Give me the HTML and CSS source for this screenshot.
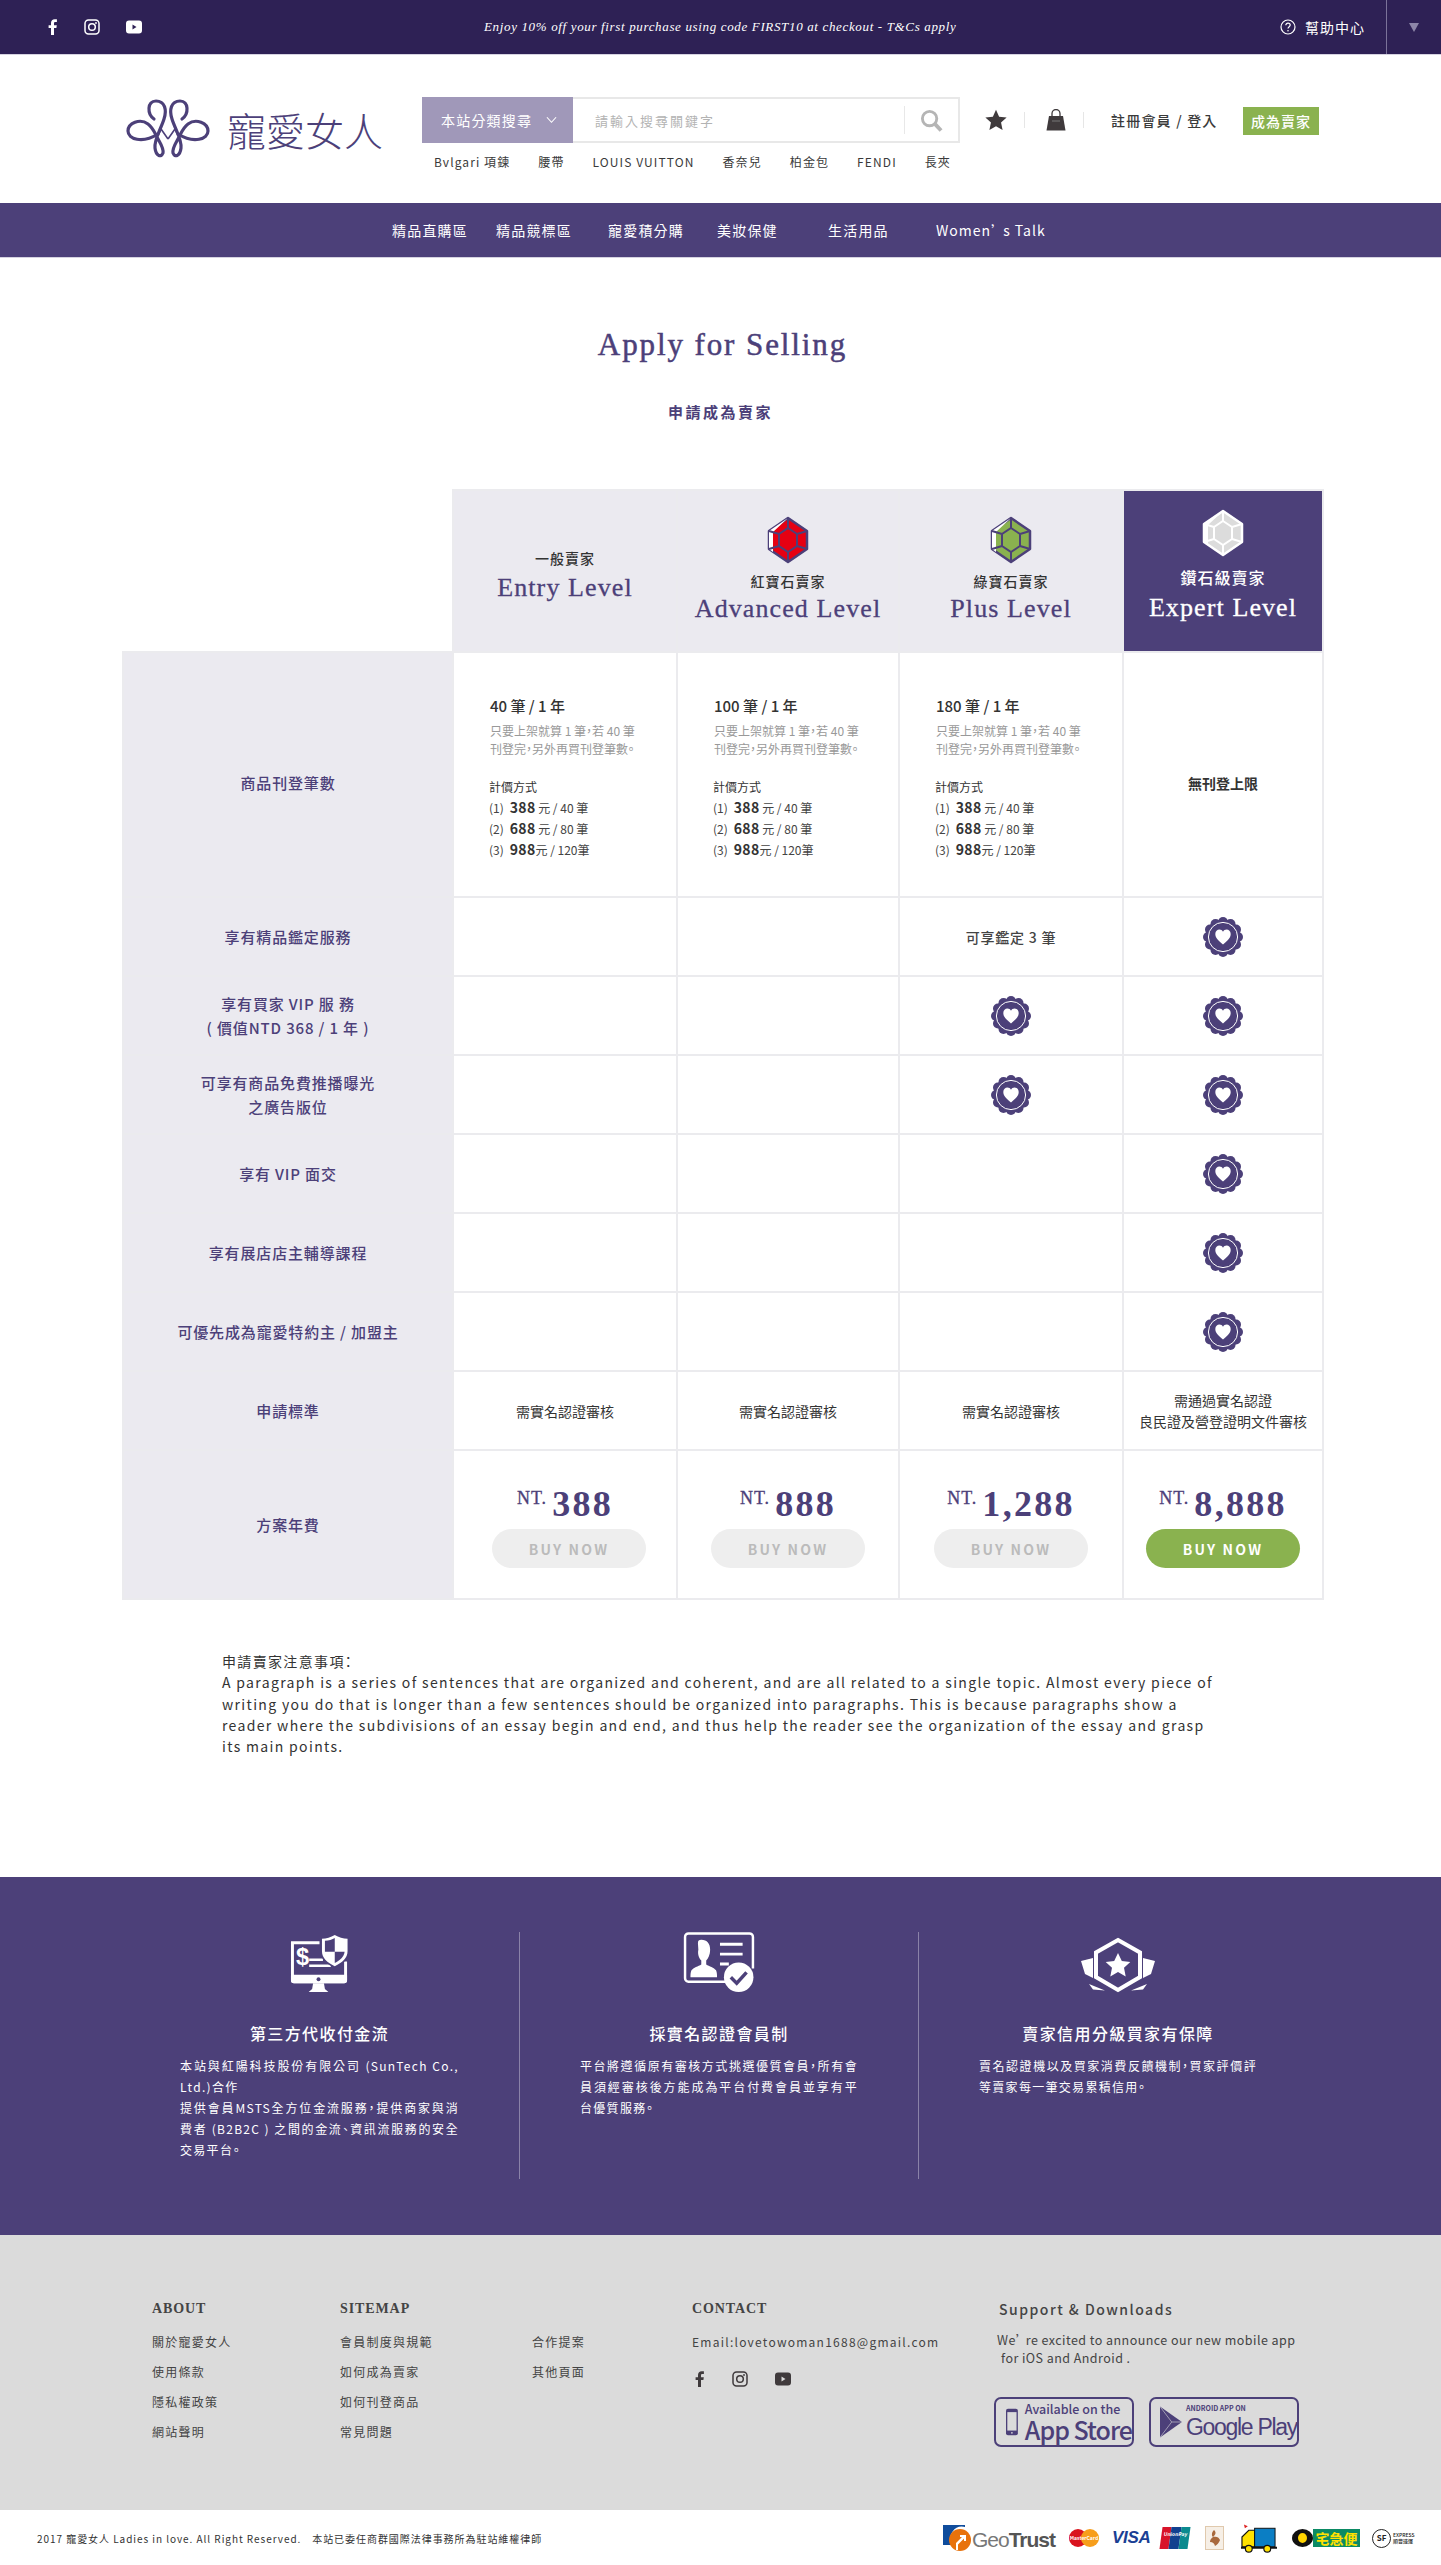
FILE: index.html
```html
<!DOCTYPE html>
<html lang="zh-Hant">
<head>
<meta charset="utf-8">
<title>寵愛女人 Apply for Selling</title>
<link rel="stylesheet" href="styles.css">
</head>
<body>
<svg class="defs" width="0" height="0" aria-hidden="true">
  <defs>
    <symbol id="badge" viewBox="0 0 40 40">
      <g fill="#4c4079">
        <circle cx="20" cy="20" r="17.6"/>
        <circle cx="20" cy="5" r="5"/><circle cx="27.5" cy="7" r="5"/><circle cx="33" cy="12.5" r="5"/><circle cx="35" cy="20" r="5"/><circle cx="33" cy="27.5" r="5"/><circle cx="27.5" cy="33" r="5"/><circle cx="20" cy="35" r="5"/><circle cx="12.5" cy="33" r="5"/><circle cx="7" cy="27.5" r="5"/><circle cx="5" cy="20" r="5"/><circle cx="7" cy="12.5" r="5"/><circle cx="12.5" cy="7" r="5"/>
      </g>
      <circle cx="20" cy="20" r="14.6" fill="none" stroke="#fff" stroke-width="1"/>
      <path d="M20 27.5 C16 24 12.3 21.2 12.3 17 C12.3 14.300 14.300 12.600 16.400 12.600 C18 12.600 19.300 13.500 20 14.800 C20.700 13.500 22 12.600 23.600 12.600 C25.700 12.600 27.700 14.300 27.700 17 C27.700 21.200 24 24 20 27.500Z" fill="#fff"/>
    </symbol>
    <symbol id="fb" viewBox="0 0 10 16"><path d="M3 16V9H.6V6.200H3V4.100C3 1.500 4.500.2 6.700.2c1 0 1.900.1 2.200.1v2.600H7.400c-1.200 0-1.400.6-1.400 1.400v2h2.800L8.400 9H6v7z" fill="currentColor"/></symbol>
    <symbol id="ig" viewBox="0 0 16 16"><rect x="1" y="1" width="14" height="14" rx="3.500" fill="none" stroke="currentColor" stroke-width="1.500"/><circle cx="8" cy="8" r="3.300" fill="none" stroke="currentColor" stroke-width="1.500"/><circle cx="12" cy="4" r=".9" fill="currentColor"/></symbol>
    <symbol id="yt" viewBox="0 0 16 16"><path fill-rule="evenodd" d="M3 1.500h10a3 3 0 0 1 3 3v7a3 3 0 0 1-3 3H3a3 3 0 0 1-3-3v-7a3 3 0 0 1 3-3zM6.500 5.500v5l4-2.500z" fill="currentColor"/></symbol>
    <symbol id="gem" viewBox="0 0 42 48">
      <path d="M21 2 40 15V33L21 46 2 33V15Z" fill="var(--gem)" stroke="var(--line)" stroke-width="2.500" stroke-linejoin="round"/>
      <path d="M21 2 2 15V33L6 36V16Z" fill="#fff"/>
      <path d="M21 12 30 18V30L21 36 12 30V18ZM21 2V12M40 15 30 18M40 33 30 30M21 46V36M2 33 12 30M2 15 12 18" fill="none" stroke="var(--line)" stroke-width="2"/>
    </symbol>
    <symbol id="wing" viewBox="6 6 84 62">
      <path d="M34 27C27 22 27 9 36 9 45 9 47 18 44 27 41 37 34 47 35 56 36 64 41 66 43 61 44 55 39 50 36 43 34 39 32 35 28 32 20 26 8 31 8 39 8 47 22 52 38 42" fill="none" stroke="#4c4079" stroke-width="3.200" stroke-linecap="round"/>
      <path d="M38 44 41 37 48 47" fill="none" stroke="#4c4079" stroke-width="1.600"/>
    </symbol>
  </defs>
</svg>

<div class="topbar">
  <div class="top-social">
    <svg class="ic-f"><use href="#fb"/></svg>
    <svg class="ic-s"><use href="#ig"/></svg>
    <svg class="ic-s"><use href="#yt"/></svg>
  </div>
  <p class="promo">Enjoy 10% off your first purchase using code FIRST10 at checkout - T&amp;Cs apply</p>
  <div class="help">
    <svg class="help-ic" viewBox="0 0 16 16"><circle cx="8" cy="8" r="7" fill="none" stroke="#fff" stroke-width="1.200"/><path d="M5.800 6.200C5.800 4.900 6.800 4.100 8 4.100c1.300 0 2.200.8 2.200 1.900 0 1.700-2.200 1.700-2.200 3.600" fill="none" stroke="#fff" stroke-width="1.200"/><circle cx="8" cy="11.700" r=".8" fill="#fff"/></svg>
    <span>幫助中心</span>
  </div>
  <div class="lang"><span class="tri"></span></div>
</div>

<header class="masthead">
  <a class="logo">
    <svg class="logo-mark" viewBox="6 6 84 62">
      <use href="#wing" x="6" y="6" width="84" height="62"/>
      <g transform="translate(96 0) scale(-1 1)"><use href="#wing" x="6" y="6" width="84" height="62"/></g>
    </svg>
    <span class="logo-text">寵愛女人</span>
  </a>
  <div class="search-col">
    <div class="search">
      <div class="search-cat"><span>本站分類搜尋</span>
        <svg class="chev" viewBox="0 0 12 8"><path d="M1 1l5 5.500L11 1" fill="none" stroke="#fff" stroke-width="1.200"/></svg>
      </div>
      <div class="search-input">請輸入搜尋關鍵字</div>
      <div class="search-btn">
        <svg viewBox="0 0 24 24" class="mag"><circle cx="10" cy="10" r="7.500" fill="none" stroke="#b5b5b5" stroke-width="3"/><path d="M15.500 15.500 22 22.500" stroke="#b5b5b5" stroke-width="4"/></svg>
      </div>
    </div>
    <ul class="tags">
      <li>Bvlgari 項鍊</li><li>腰帶</li><li>LOUIS VUITTON</li><li>香奈兒</li><li>柏金包</li><li>FENDI</li><li>長夾</li>
    </ul>
  </div>
  <div class="actions">
    <svg class="star" viewBox="0 0 24 24"><path d="M12 .8l3.400 7.600 8.200.9-6.100 5.500 1.700 8.100L12 18.800l-7.200 4.100 1.700-8.100L.4 9.300l8.200-.9z" fill="#3f3a3c"/></svg>
    <span class="sep"></span>
    <svg class="bag" viewBox="0 0 20 22"><path d="M6 7V4.500a4 4 0 0 1 8 0V7" fill="none" stroke="#3f3a3c" stroke-width="1.300"/><path d="M3 7h14l2.500 14.500H.5z" fill="#3f3a3c"/><path d="M6 12h8" stroke="#777" stroke-width="1"/></svg>
    <span class="sep"></span>
    <a class="login">註冊會員 / 登入</a>
    <a class="become">成為賣家</a>
  </div>
</header>

<nav class="mainnav">
  <a class="n1">精品直購區</a><a class="n2">精品競標區</a><a class="n3">寵愛積分購</a><a class="n4">美妝保健</a><a class="n5">生活用品</a><a class="n6">Women’ s Talk</a>
</nav>

<main>
  <h1 class="title">Apply for Selling</h1>
  <p class="subtitle">申請成為賣家</p>

  <table class="plans">
    <colgroup><col class="c0"><col class="c1"><col class="c2"><col class="c3"><col class="c4"></colgroup>
    <thead>
      <tr class="r-head">
        <th class="blank"></th>
        <th class="plan entry"><span class="pname">一般賣家</span><span class="plevel">Entry Level</span></th>
        <th class="plan">
          <svg class="gem gem-red"><use href="#gem"/></svg>
          <span class="pname">紅寶石賣家</span><span class="plevel">Advanced Level</span></th>
        <th class="plan">
          <svg class="gem gem-green"><use href="#gem"/></svg>
          <span class="pname">綠寶石賣家</span><span class="plevel">Plus Level</span></th>
        <th class="plan expert">
          <svg class="gem gem-white"><use href="#gem"/></svg>
          <span class="pname">鑽石級賣家</span><span class="plevel">Expert Level</span></th>
      </tr>
    </thead>
    <tbody>
      <tr class="r-big">
        <th class="lbl lowered">商品刊登筆數</th>
        <td class="quota">
          <p class="q-main">40 筆 / 1 年</p>
          <p class="q-note">只要上架就算 1 筆，若 40 筆<br>刊登完，另外再買刊登筆數。</p>
          <p class="q-how">計價方式</p>
          <p class="q-line">(1)<b>388</b> 元 / 40 筆</p>
          <p class="q-line">(2)<b>688</b> 元 / 80 筆</p>
          <p class="q-line">(3)<b>988</b>元 / 120筆</p>
        </td>
        <td class="quota">
          <p class="q-main">100 筆 / 1 年</p>
          <p class="q-note">只要上架就算 1 筆，若 40 筆<br>刊登完，另外再買刊登筆數。</p>
          <p class="q-how">計價方式</p>
          <p class="q-line">(1)<b>388</b> 元 / 40 筆</p>
          <p class="q-line">(2)<b>688</b> 元 / 80 筆</p>
          <p class="q-line">(3)<b>988</b>元 / 120筆</p>
        </td>
        <td class="quota">
          <p class="q-main">180 筆 / 1 年</p>
          <p class="q-note">只要上架就算 1 筆，若 40 筆<br>刊登完，另外再買刊登筆數。</p>
          <p class="q-how">計價方式</p>
          <p class="q-line">(1)<b>388</b> 元 / 40 筆</p>
          <p class="q-line">(2)<b>688</b> 元 / 80 筆</p>
          <p class="q-line">(3)<b>988</b>元 / 120筆</p>
        </td>
        <td class="val strong lowered">無刊登上限</td>
      </tr>
      <tr class="r"><th class="lbl">享有精品鑑定服務</th><td></td><td></td><td class="val semi">可享鑑定 3 筆</td><td class="val"><svg class="badge"><use href="#badge"/></svg></td></tr>
      <tr class="r"><th class="lbl">享有買家 VIP 服 務<br>( 價值NTD 368 / 1 年 )</th><td></td><td></td><td class="val"><svg class="badge"><use href="#badge"/></svg></td><td class="val"><svg class="badge"><use href="#badge"/></svg></td></tr>
      <tr class="r"><th class="lbl">可享有商品免費推播曝光<br>之廣告版位</th><td></td><td></td><td class="val"><svg class="badge"><use href="#badge"/></svg></td><td class="val"><svg class="badge"><use href="#badge"/></svg></td></tr>
      <tr class="r"><th class="lbl">享有 VIP 面交</th><td></td><td></td><td></td><td class="val"><svg class="badge"><use href="#badge"/></svg></td></tr>
      <tr class="r"><th class="lbl">享有展店店主輔導課程</th><td></td><td></td><td></td><td class="val"><svg class="badge"><use href="#badge"/></svg></td></tr>
      <tr class="r"><th class="lbl">可優先成為寵愛特約主 / 加盟主</th><td></td><td></td><td></td><td class="val"><svg class="badge"><use href="#badge"/></svg></td></tr>
      <tr class="r"><th class="lbl">申請標準</th><td class="val">需實名認證審核</td><td class="val">需實名認證審核</td><td class="val">需實名認證審核</td><td class="val tight">需通過實名認證<br>良民證及營登證明文件審核</td></tr>
      <tr class="r-price">
        <th class="lbl">方案年費</th>
        <td class="price first"><div class="amt"><sup>NT.</sup>388</div><a class="buy">BUY NOW</a></td>
        <td class="price"><div class="amt"><sup>NT.</sup>888</div><a class="buy">BUY NOW</a></td>
        <td class="price"><div class="amt"><sup>NT.</sup>1,288</div><a class="buy">BUY NOW</a></td>
        <td class="price"><div class="amt"><sup>NT.</sup>8,888</div><a class="buy on">BUY NOW</a></td>
      </tr>
    </tbody>
  </table>

  <section class="notes">
    <p>申請賣家注意事項：</p>
    <p>A paragraph is a series of sentences that are organized and coherent, and are all related to a single topic. Almost every piece of writing you do that is longer than a few sentences should be organized into paragraphs. This is because paragraphs show a reader where the subdivisions of an essay begin and end, and thus help the reader see the organization of the essay and grasp its main points.</p>
  </section>
</main>

<section class="features">
  <article class="feat">
    <svg class="feat-ic" viewBox="0 0 62 62" width="62" height="61">
      <path d="M1.500 9.500h29v3H4.500v31h51V30h3v19a3 3 0 0 1-3 3h-51a3 3 0 0 1-3-3z" fill="#fff"/>
      <path d="M1.500 44h57v5a3 3 0 0 1-3 3h-51a3 3 0 0 1-3-3z" fill="#fff"/>
      <circle cx="29.500" cy="48" r="2" fill="#4c4079"/>
      <path d="M24 52h11l1 6 3.500 3h-20l3.500-3z" fill="#fff"/>
      <text x="6.500" y="34" class="dollar">$</text>
      <path d="M20 27h14v2.500H20zM20 33h22v2.500H20z" fill="#fff"/>
      <path d="M46 1c4 3 9 4.500 14.500 4.500v14c0 8-6 13-14.500 17-8.500-4-14.500-9-14.500-17v-14C37 5.500 42 4 46 1z" fill="#4c4079"/>
      <path d="M46 3c4 2.500 8.500 3.800 13 3.800v12.700c0 7-5.500 11.500-13 15.300-7.500-3.800-13-8.300-13-15.300V6.800C37.500 6.800 42 5.500 46 3z" fill="#fff"/>
      <path d="M46 6v14H36v-11c4-.3 7.500-1.300 10-3zM46 20h10c-.5 5-4.500 8.500-10 11.500z" fill="#4c4079"/>
    </svg>
    <h3>第三方代收付金流</h3>
    <p>本站與紅陽科技股份有限公司 (SunTech Co., Ltd.)合作<br>提供會員MSTS全方位金流服務，提供商家與消費者 (B2B2C ) 之間的金流、資訊流服務的安全交易平台。</p>
  </article>
  <article class="feat">
    <svg class="feat-ic" viewBox="0 0 72 62" width="72" height="61">
      <path d="M52 50.500H5a3.500 3.500 0 0 1-3.500-3.500V5A3.500 3.500 0 0 1 5 1.500h62A3.500 3.500 0 0 1 70.500 5v32" fill="none" stroke="#fff" stroke-width="2.500"/>
      <path d="M18 8c6 0 9 4 9 10 0 5-2 9-4 11v4c3 2 8 3 10 6 1 2 1 5 1 7H7c0-2 0-5 1-7 2-3 7-4 10-6v-4c-2-2-4-6-3-11 0-6-2-10 3-10z" fill="#fff"/>
      <path d="M37 11h23v3H37zM37 21h23v3H37zM37 31h9v3h-9z" fill="#fff"/>
      <circle cx="56" cy="46" r="15" fill="#fff"/>
      <path d="M48 46l6 6 10-11" fill="none" stroke="#4c4079" stroke-width="3.500"/>
    </svg>
    <h3>採實名認證會員制</h3>
    <p>平台將遵循原有審核方式挑選優質會員，所有會員須經審核後方能成為平台付費會員並享有平台優質服務。</p>
  </article>
  <article class="feat">
    <svg class="feat-ic" viewBox="0 0 74 61" width="74" height="61">
      <path d="M37 8 59 20.500V45L37 58 15 45V20.500Z" fill="none" stroke="#fff" stroke-width="4"/>
      <path d="M37 21l3.800 8 8.500 1-6.300 5.800 1.700 8.600-7.700-4.300-7.700 4.300 1.700-8.600-6.300-5.800 8.500-1z" fill="#fff"/>
      <path d="M0 29l12-3v20l-8-4zM74 29l-12-3v20l8-4zM8 52l16 6.500-12-1zM66 52l-16 6.500 12-1z" fill="#fff"/>
    </svg>
    <h3>賣家信用分級買家有保障</h3>
    <p>賣名認證機以及買家消費反饋機制，買家評價評等賣家每一筆交易累積信用。</p>
  </article>
</section>

<footer class="footer">
  <div class="fcol about">
    <h4>ABOUT</h4>
    <ul><li>關於寵愛女人</li><li>使用條款</li><li>隱私權政策</li><li>網站聲明</li></ul>
  </div>
  <div class="fcol sitemap">
    <h4>SITEMAP</h4>
    <div class="sitemap-lists">
      <ul class="sm1"><li>會員制度與規範</li><li>如何成為賣家</li><li>如何刊登商品</li><li>常見問題</li></ul>
      <ul><li>合作提案</li><li>其他頁面</li></ul>
    </div>
  </div>
  <div class="fcol contact">
    <h4>CONTACT</h4>
    <p class="email">Email:lovetowoman1688@gmail.com</p>
    <div class="foot-social">
      <svg class="ic-f"><use href="#fb"/></svg>
      <svg class="ic-s"><use href="#ig"/></svg>
      <svg class="ic-s"><use href="#yt"/></svg>
    </div>
  </div>
  <div class="fcol support">
    <h5>Support &amp; Downloads</h5>
    <p>We’ re excited to announce our new mobile app<br><span class="indent">for iOS and Android .</span></p>
    <div class="stores">
      <a class="store apple">
        <svg class="phone" viewBox="0 0 18 40"><rect width="18" height="40" rx="3" fill="#4c4079"/><rect x="2" y="5" width="14" height="28" fill="#dbdbdb"/><circle cx="9" cy="36.500" r="1.300" fill="#dbdbdb"/></svg>
        <span class="store-txt"><span class="as1">Available on the</span><span class="as2">App Store</span></span>
      </a>
      <a class="store google">
        <svg class="play" viewBox="0 0 30 42"><path d="M0 0 30 21 0 42z" fill="#4c4079"/><path d="M0 0 16 21 0 42M16 21H30" fill="none" stroke="#dbdbdb" stroke-width=".8"/></svg>
        <span class="store-txt"><span class="gp1">ANDROID APP ON</span><span class="gp2">Google Play</span></span>
      </a>
    </div>
  </div>
</footer>

<div class="legal">
  <p class="copy">2017 寵愛女人 Ladies in love. All Right Reserved.　本站已委任商群國際法律事務所為駐站維權律師</p>
  <div class="marks">
    <span class="geo"><svg viewBox="0 0 28 26" class="geo-ic"><path d="M0 0H22V2A12 12 0 0 0 9 20H0z" fill="#0f4c9c"/><circle cx="17" cy="15" r="11" fill="#e8720c"/><path d="M17 10h6v6h-2v-2.500L15 19.500V25h-2v-7l6-6h-2z" fill="#fff"/></svg><span class="geo-t">Geo<b>Trust</b></span></span>
    <span class="mc"><i class="mc-r"></i><i class="mc-y"></i><em>MasterCard</em></span>
    <span class="visa">VISA</span>
    <span class="up"><i></i><i></i><i></i><em>UnionPay</em></span>
    <span class="gift"><svg viewBox="0 0 19 24"><rect x=".5" y=".5" width="18" height="23" fill="#f6efe6" stroke="#e0c9ad"/><path d="M9 4c3 3 1 5-1 7 3-1 6 0 7 3-1 3-3 5-5 6-1-3-2-4-5-4 0-3 2-4 3-5-2-2-1-5 1-7z" fill="#a8683c"/></svg></span>
    <span class="truck"><svg viewBox="0 0 37 30"><path d="M1 14l7-7h6v17H1z" fill="#ffe100" stroke="#111" stroke-width="1.200"/><rect x="14" y="5" width="21" height="19" fill="#0b7ec4" stroke="#111" stroke-width="1"/><path d="M0 24h37v2H0z" fill="#111"/><circle cx="8" cy="26" r="3.500" fill="#ffe100" stroke="#111" stroke-width="1.200"/><circle cx="27" cy="26" r="3.500" fill="#ffe100" stroke="#111" stroke-width="1.200"/><path d="M3 1l4 2-3 2z" fill="#d22"/></svg></span>
    <span class="yamato"><i></i><em>宅急便</em></span>
    <span class="sf"><i>SF</i><em>EXPRESS<br>順豐速運</em></span>
  </div>
</div>
</body>
</html>
```
FILE: styles.css
```css
* { box-sizing: border-box; }
html, body { margin: 0; padding: 0; }
body {
  width: 1441px;
  font-family: "Noto Sans CJK TC", "Noto Sans", sans-serif;
  font-feature-settings: "palt";
  color: #333;
  background: #fff;
}
p, ul, h1, h3, h4, h5 { margin: 0; padding: 0; }
ul { list-style: none; }
em, i { font-style: normal; }
.defs { position: absolute; }

/* top bar */
.topbar {
  height: 55px;
  background: #2e2155;
  border-bottom: 1px solid #d5d2e0;
  color: #fff;
  display: flex;
  align-items: center;
}
.top-social {
  width: 484px;
  padding-left: 48px;
  display: flex;
  align-items: center;
  color: #fff;
}
.ic-f { width: 10px; height: 16px; margin-right: 26px; }
.ic-s { width: 16px; height: 16px; margin-right: 26px; }
.promo {
  width: 796px;
  font-family: "Liberation Serif", serif;
  font-style: italic;
  font-size: 13px;
  letter-spacing: .65px;
  color: #fff;
}
.help {
  width: 106px;
  height: 54px;
  display: flex;
  align-items: center;
  font-size: 14px;
  letter-spacing: 1px;
}
.help-ic { width: 16px; height: 16px; margin-right: 9px; }
.lang {
  width: 55px;
  height: 54px;
  border-left: 1px solid #7b7399;
  display: flex;
  align-items: center;
  justify-content: center;
}
.tri {
  width: 0; height: 0;
  border-left: 5px solid transparent;
  border-right: 5px solid transparent;
  border-top: 9px solid #8d86a8;
}

/* header */
.masthead {
  height: 148px;
  padding: 42px 0 0 126px;
  display: flex;
  align-items: flex-start;
}
.logo { width: 296px; display: flex; align-items: center; margin-top: 2px; height: 60px; }
.logo-mark { width: 84px; height: 62px; margin-right: 17px; flex: none; }
.logo-text {
  font-size: 39px;
  font-weight: 300;
  letter-spacing: 0;
  color: #4c4079;
  line-height: 60px;
  white-space: nowrap;
}
.search-col { width: 538px; }
.search { display: flex; height: 46px; }
.search-cat {
  width: 151px;
  background: #a098b9;
  color: #fff;
  font-size: 14px;
  letter-spacing: 1.2px;
  display: flex;
  align-items: center;
  padding-left: 19px;
}
.chev { width: 11px; height: 8px; margin-left: 14px; }
.search-input {
  flex: 1;
  border: 2px solid #e8e8e8;
  border-width: 2px 0;
  padding-left: 22px;
  font-size: 13px;
  letter-spacing: 2px;
  color: #b3b3b3;
  display: flex;
  align-items: center;
}
.search-btn {
  width: 56px;
  border: 2px solid #e8e8e8;
  border-left: 0;
  display: flex;
  align-items: center;
  padding-left: 16px;
  position: relative;
}
.search-btn::before {
  content: "";
  position: absolute;
  left: 0; top: 7px; bottom: 7px;
  width: 1px;
  background: #e8e8e8;
}
.mag { width: 23px; height: 23px; }
.tags {
  display: flex;
  gap: 28px;
  padding-left: 12px;
  font-size: 12px;
  letter-spacing: 1.100px;
  line-height: 20px;
  margin-top: 9px;
  color: #3a3a3a;
}
.actions {
  display: flex;
  align-items: center;
  height: 46px;
  margin-left: 25px;
}
.star { width: 22px; height: 22px; }
.sep { width: 1px; height: 16px; background: #e6e6e6; margin: 0 21px 0 17px; }
.bag { width: 20px; height: 22px; }
.bag + .sep { margin: 0 27px 0 17px; }
.login { font-size: 14px; font-weight: 500; letter-spacing: 1.200px; width: 134px; color: #3a3a3a; white-space: nowrap; }
.become {
  width: 76px;
  height: 28px;
  background: #8ab24f;
  color: #fff;
  font-size: 14px;
  letter-spacing: 1px;
  font-weight: 500;
  display: flex;
  align-items: center;
  justify-content: center;
  margin-top: 2px;
  margin-left: -2px;
}

/* nav */
.mainnav {
  height: 55px;
  background: #4c4079;
  border-bottom: 1px solid #d5d2e0;
  display: flex;
  align-items: center;
  padding-left: 392px;
  color: #fff;
  font-size: 14px;
  letter-spacing: 1.200px;
}
.mainnav a { display: block; white-space: nowrap; }
.n1 { width: 104px; }
.n2 { width: 112px; }
.n3 { width: 109px; }
.n4 { width: 111px; }
.n5 { width: 108px; }
.n6 { letter-spacing: 1px; }

/* title */
.title {
  padding: 66px 0 0 4px;
  text-align: center;
  font-family: "Liberation Serif", serif;
  font-weight: 400;
  font-size: 31px;
  line-height: 42px;
  letter-spacing: 1.900px;
  color: #4c4079;
  -webkit-text-stroke: .5px #4c4079;
}
.subtitle {
  margin-top: 35px;
  text-align: center;
  font-size: 15px;
  line-height: 22px;
  font-weight: 700;
  letter-spacing: 2.500px;
  color: #4c4079;
}

/* table */
.plans {
  margin: 66px 0 0 122px;
  width: 1200px;
  table-layout: fixed;
  border-collapse: collapse;
}
.c0 { width: 330px; }
.c1 { width: 224px; }
.c2 { width: 222px; }
.c3 { width: 224px; }
.c4 { width: 200px; }
.plans td, .plans th { border: 2px solid #ebebee; padding: 0; }
.plans th.blank { border: 0; background: #fff; border-bottom: 2px solid #ebebee; }
.r-head { height: 162px; }
.r-big { height: 245px; }
.r { height: 79px; }
.r-price { height: 149px; }
.plan { background: #ebeaf0; text-align: center; vertical-align: middle; font-weight: 400; }
.plans .plan.entry { padding-top: 10px; }
.entry .plevel { margin-top: 2px; }
.plan.expert { background: #4c4079; color: #fff; }
.pname { display: block; font-size: 14px; line-height: 22px; font-weight: 500; color: #333; letter-spacing: 1px; }
.expert .pname { color: #fff; font-size: 16px; }
.plevel {
  display: block;
  font-family: "Liberation Serif", serif;
  font-size: 26px;
  line-height: 34px;
  letter-spacing: 1.100px;
  color: #4c4079;
  -webkit-text-stroke: .3px #4c4079;
}
.expert .plevel { color: #fff; -webkit-text-stroke: .3px #fff; margin-top: 3px; }
.gem { display: block; width: 42px; height: 48px; margin: 0 auto 6px; }
.gem-red { --gem: #e60012; --line: #4c4079; }
.gem-green { --gem: #8ab24f; --line: #4c4079; }
.gem-white { --gem: #dcdcdc; --line: #fff; margin-top: -8px; margin-bottom: 9px; }
.lbl {
  background: #ebeaf0;
  color: #4c4079;
  font-size: 15px;
  font-weight: 500;
  line-height: 24px;
  text-align: center;
  vertical-align: middle;
  letter-spacing: .85px;
}
.lowered { padding-top: 16px !important; }
.quota { vertical-align: top; padding: 41px 0 0 36px !important; }
.q-main { font-size: 15px; line-height: 24px; font-weight: 500; color: #333; }
.q-note { font-size: 12px; line-height: 18px; color: #999; margin-top: 4px; white-space: nowrap; }
.q-how { font-size: 12px; line-height: 20px; color: #333; margin-top: 19px; margin-left: -1px; }
.q-line { font-size: 12px; line-height: 21px; color: #444; margin-left: -1px; white-space: nowrap; }
.q-line b { font-size: 14px; font-weight: 700; color: #333; margin-left: 6px; letter-spacing: .3px; }
.val { text-align: center; vertical-align: middle; font-size: 14px; color: #333; }
.val.strong { font-weight: 700; }
.val.semi { font-weight: 500; letter-spacing: .8px; color: #444; }
.val.tight { line-height: 21px; }
.badge { display: block; width: 40px; height: 40px; margin: 0 auto; }
.price { text-align: center; vertical-align: top; }
.amt {
  font-family: "Liberation Serif", serif;
  font-size: 36px;
  font-weight: 700;
  letter-spacing: 2.300px;
  line-height: 40px;
  color: #4c4079;
  margin-top: 33px;
}
.amt sup { font-size: 18px; font-weight: 400; letter-spacing: 1px; vertical-align: 12px; line-height: 0; margin-right: 5px; -webkit-text-stroke: .3px #4c4079; }
.buy {
  display: flex;
  width: 154px;
  height: 39px;
  margin: 5px auto 0;
  border-radius: 20px;
  background: #eee;
  color: #bbb;
  font-size: 14px;
  font-weight: 700;
  letter-spacing: 2.200px;
  align-items: center;
  justify-content: center;
}
.first .buy { margin-left: 38px; }
.buy.on { background: #8ab24f; color: #fff; }

/* notes */
.notes {
  margin: 51px 0 0 222px;
  width: 994px;
  height: 226px;
  font-size: 14px;
  line-height: 21.300px;
  letter-spacing: 1.340px;
  color: #333;
}

/* features */
.features {
  height: 358px;
  background: #4c4079;
  color: #fff;
  padding: 55px 0 0 120px;
  display: flex;
  align-items: flex-start;
}
.feat {
  width: 399px;
  height: 247px;
  padding: 0 60px;
  border-left: 1px solid #8a82a8;
  text-align: center;
}
.feat:first-child { border-left: 0; }
.feat-ic { display: block; margin: 0 auto; }
.dollar { font-family: "Liberation Sans", sans-serif; font-size: 24px; font-weight: 700; fill: #fff; }
.feat h3 {
  font-size: 16px;
  line-height: 24px;
  font-weight: 500;
  letter-spacing: 1.400px;
  margin-top: 28px;
}
.feat p {
  margin-top: 10px;
  text-align: justify;
  font-size: 12px;
  line-height: 21px;
  letter-spacing: 1.300px;
}

/* footer */
.footer {
  height: 275px;
  background: #dbdbdb;
  padding: 64px 0 0 152px;
  display: flex;
  align-items: flex-start;
  color: #444;
}
.fcol h4 {
  font-family: "Liberation Serif", serif;
  font-size: 14px;
  font-weight: 700;
  line-height: 20px;
  letter-spacing: .9px;
  color: #444;
}
.fcol li { font-size: 12px; line-height: 30px; letter-spacing: 1.250px; white-space: nowrap; }
.fcol ul { margin-top: 8px; }
.about { width: 188px; }
.sitemap { width: 352px; }
.sitemap-lists { display: flex; }
.sm1 { width: 192px; }
.contact { width: 305px; }
.email { margin-top: 8px; font-size: 12px; line-height: 30px; letter-spacing: 1.250px; white-space: nowrap; }
.foot-social { display: flex; align-items: center; margin-top: 14px; padding-left: 3px; color: #3f3a3c; }
.foot-social .ic-f { margin-right: 27px; }
.foot-social .ic-s { margin-right: 27px; }
.support { width: 310px; }
.support h5 {
  margin-left: 2px;
  font-size: 14px;
  line-height: 20px;
  font-weight: 500;
  letter-spacing: 1.500px;
  color: #444;
}
.support p {
  margin-top: 12px;
  font-size: 12.500px;
  line-height: 18px;
  letter-spacing: .45px;
  white-space: nowrap;
  color: #444;
}
.indent { margin-left: 4px; }
.stores { display: flex; gap: 15px; margin-top: 30px; margin-left: -3px; }
.store {
  height: 50px;
  border: 2px solid #4c4079;
  border-radius: 7px;
  display: flex;
  align-items: center;
  color: #4c4079;
}
.apple { width: 140px; padding-left: 10px; }
.google { width: 150px; padding-left: 9px; }
.phone { width: 18px; height: 40px; margin-right: 7px; }
.play { width: 30px; height: 42px; margin-right: 4px; }
.store-txt { display: flex; flex-direction: column; white-space: nowrap; }
.as1 { font-size: 12.500px; line-height: 14px; font-weight: 500; }
.as2 { font-size: 25px; line-height: 26px; letter-spacing: -1px; font-weight: 500; }
.gp1 { font-size: 7px; line-height: 9px; font-weight: 700; }
.gp2 { font-family: "Liberation Sans", sans-serif; font-size: 23px; line-height: 28px; letter-spacing: -1.300px; }

/* legal */
.legal {
  height: 56px;
  padding: 0 27px 0 37px;
  display: flex;
  align-items: center;
  justify-content: space-between;
}
.copy { font-size: 10px; letter-spacing: .95px; white-space: nowrap; color: #333; }
.marks { display: flex; align-items: center; height: 30px; }
.geo { display: flex; align-items: flex-end; width: 126px; color: #777; }
.geo-ic { width: 28px; height: 26px; }
.geo-t { font-family: "Liberation Sans", sans-serif; font-size: 21px; line-height: 22px; letter-spacing: -1px; margin-left: 1px; }
.geo-t b { color: #555; }
.mc { position: relative; width: 30px; height: 18px; margin-right: 13px; }
.mc-r, .mc-y { position: absolute; top: 0; width: 18px; height: 18px; border-radius: 50%; }
.mc-r { left: 0; background: #d9131e; }
.mc-y { right: 0; background: #f79e1b; }
.mc em { position: absolute; left: 0; right: 0; top: 5px; font-size: 5px; line-height: 8px; text-align: center; color: #fff; font-weight: 700; white-space: nowrap; overflow: hidden; }
.visa {
  width: 49px;
  font-family: "Liberation Sans", sans-serif;
  font-style: italic;
  font-weight: 700;
  font-size: 17px;
  letter-spacing: -.3px;
  color: #1a3f94;
}
.up {
  position: relative;
  width: 28px;
  height: 22px;
  margin-right: 16px;
  display: flex;
  transform: skewX(-8deg);
}
.up i { flex: 1; }
.up i:nth-child(1) { background: #d8132a; }
.up i:nth-child(2) { background: #12408f; }
.up i:nth-child(3) { background: #0b8a8f; }
.up em { position: absolute; left: 0; right: 0; top: 3px; font-size: 5px; line-height: 8px; text-align: center; color: #fff; font-weight: 700; }
.gift svg { display: block; width: 19px; height: 24px; }
.gift { margin-right: 17px; }
.truck svg { display: block; width: 36px; height: 30px; }
.truck { margin-right: 15px; }
.yamato { display: flex; align-items: center; width: 68px; margin-right: 12px; }
.yamato i { width: 21px; height: 18px; border-radius: 50%; background: #ffd400; border: 5px solid #111; border-width: 4px 6px; }
.yamato em {
  flex: 1;
  background: #0b8a64;
  color: #ffe100;
  font-size: 14px;
  line-height: 18px;
  font-weight: 700;
  text-align: center;
  white-space: nowrap;
}
.sf { display: flex; align-items: center; width: 42px; color: #222; }
.sf i { width: 19px; height: 19px; flex: none; border: 1.500px solid #222; border-radius: 50%; font-size: 8px; line-height: 16px; font-weight: 700; text-align: center; }
.sf em { font-size: 5px; line-height: 6px; margin-left: 2px; white-space: nowrap; font-weight: 500; }
```
